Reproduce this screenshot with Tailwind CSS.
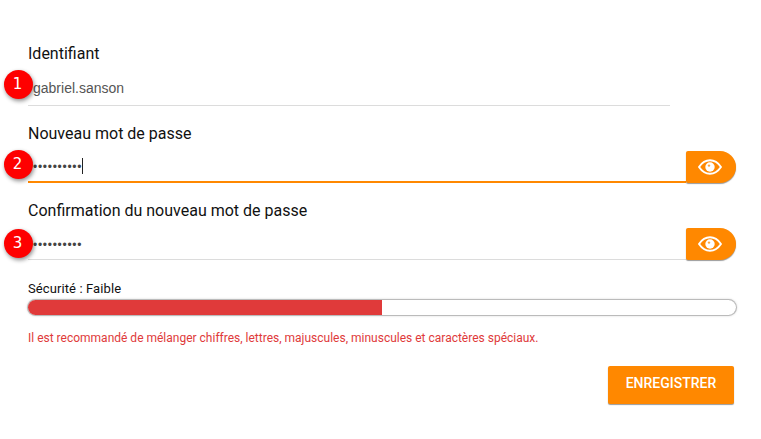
<!DOCTYPE html>
<html lang="fr">
<head>
<meta charset="utf-8">
<title>Mot de passe</title>
<script src="https://cdn.jsdelivr.net/npm/@tailwindcss/browser@4"></script>
</head>
<body class="bg-white overflow-hidden font-['Roboto','Liberation_Sans',sans-serif] text-[#111]">
<svg class="hidden">
  <symbol id="eye" viewBox="0 0 24 16">
    <path d="M1 8Q5.500 1.300 12 1.300T23 8Q18.500 14.700 12 14.700T1 8Z" fill="none" stroke="#fff" stroke-width="1.900" stroke-linejoin="round"/>
    <circle cx="12" cy="8" r="4.700" fill="#fff"/>
    <circle cx="11" cy="6.600" r="1.200" fill="#ff8800" fill-opacity=".75"/>
  </symbol>
</svg>
<main class="flex flex-col w-[761px] h-[439px] pl-7 pt-[42px]">
  <section class="relative h-[80px]">
    <label class="block text-base leading-6">Identifiant</label>
    <div class="w-[642px] h-[40px] border-b border-[#dcdcdc] pl-[5px] pt-[11px] text-sm leading-[22px] text-[#555] font-['Liberation_Sans',sans-serif]"><span>gabriel.sanson</span></div>
    <span class="absolute -left-6 top-[27.5px] size-[29px] rounded-full bg-[#fe0000] shadow-[1px_2px_4px_rgba(0,0,0,0.45)] text-white text-[15px] leading-[29px] text-center pr-[2px] font-['DejaVu_Sans',sans-serif]">1</span>
  </section>
  <section class="relative h-[77px]">
    <label class="block text-base leading-6">Nouveau mot de passe</label>
    <div class="flex w-[708px] mt-[5px]">
      <div class="flex w-[658px] h-[32px] border-b-2 border-[#ff8800] pl-[5px] pt-[7px]">
        <span class="text-xs leading-[18px] tracking-[0.72px] text-[#444] font-['Liberation_Sans',sans-serif]">••••••••••</span><i class="w-px h-4 bg-[#222]"></i>
      </div>
      <button class="flex items-center justify-center w-[50px] h-[32px] bg-[#ff8800] rounded-l-[2px] rounded-r-[16px] shadow-[0_1px_1px_rgba(0,0,0,0.4)]"><svg class="w-6 h-4 -ml-[2px]"><use href="#eye"/></svg></button>
    </div>
    <span class="absolute -left-6 top-[27.5px] size-[29px] rounded-full bg-[#fe0000] shadow-[1px_2px_4px_rgba(0,0,0,0.45)] text-white text-[15px] leading-[29px] text-center pr-[2px] font-['DejaVu_Sans',sans-serif]">2</span>
  </section>
  <section class="relative h-[81px]">
    <label class="block text-base leading-6">Confirmation du nouveau mot de passe</label>
    <div class="flex w-[708px] mt-[5px]">
      <div class="w-[658px] h-[32px] border-b border-[#dcdcdc] pl-[5px] pt-[8px]">
        <span class="block text-xs leading-[18px] tracking-[0.72px] text-[#444] font-['Liberation_Sans',sans-serif]">••••••••••</span>
      </div>
      <button class="flex items-center justify-center w-[50px] h-[32px] bg-[#ff8800] rounded-l-[2px] rounded-r-[16px] shadow-[0_1px_1px_rgba(0,0,0,0.4)]"><svg class="w-6 h-4 -ml-[2px]"><use href="#eye"/></svg></button>
    </div>
    <span class="absolute -left-6 top-[29.5px] size-[29px] rounded-full bg-[#fe0000] shadow-[1px_2px_4px_rgba(0,0,0,0.45)] text-white text-[15px] leading-[29px] text-center pr-[2px] font-['DejaVu_Sans',sans-serif]">3</span>
  </section>
  <section class="w-[708px]">
    <p class="text-[13px] leading-[18px] tracking-[0.1px]">Sécurité : Faible</p>
    <div class="mt-[2px] h-[15px] rounded-full overflow-hidden shadow-[0_0_0_1px_#bbb,0_0_3px_rgba(0,0,0,0.35)]"><div class="h-full bg-[#e03a3a]" style="width:50%"></div></div>
    <p class="mt-[14px] text-xs leading-[18px] text-[#e03a3a]">Il est recommandé de mélanger chiffres, lettres, majuscules, minuscules et caractères spéciaux.</p>
    <div class="flex justify-end mt-[19px] pr-[2px]">
      <button class="w-[126px] h-[38px] pb-[4px] rounded-[2px] bg-[#ff8800] text-white text-sm leading-5 font-medium shadow-[0_1px_1px_rgba(0,0,0,0.4)]">ENREGISTRER</button>
    </div>
  </section>
</main>
</body>
</html>
